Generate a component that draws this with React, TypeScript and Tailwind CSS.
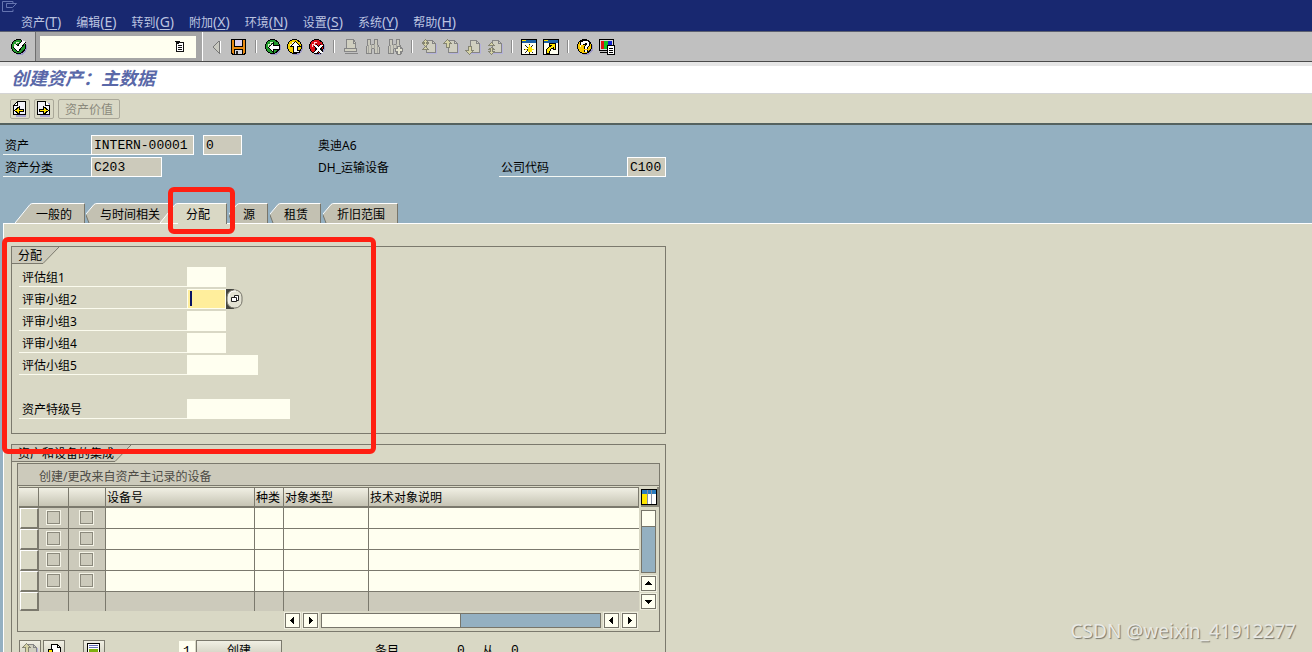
import React from 'react';

const menus = [
  ['资产', 'T'],
  ['编辑', 'E'],
  ['转到', 'G'],
  ['附加', 'X'],
  ['环境', 'N'],
  ['设置', 'S'],
  ['系统', 'Y'],
  ['帮助', 'H'],
];

type IconProps = { children: React.ReactNode; className?: string };

function Icon({ children, className = '' }: IconProps) {
  return (
    <svg width="16" height="16" viewBox="0 0 16 16" className={`block shrink-0 ${className}`} shapeRendering="crispEdges" aria-hidden="true">
      {children}
    </svg>
  );
}

function Ball({ color, shine, children }: { color: string; shine: string; children: React.ReactNode }) {
  return (
    <Icon>
      <circle cx="9" cy="9" r="7" fill="#9c98c8" />
      <circle cx="7.5" cy="7.5" r="7" fill={color} stroke="#000" />
      <path d="M3 5h2v-2h3v1h-2v2h-2v2h-1z" fill={shine} />
      {children}
    </Icon>
  );
}

function ToolButton({ label, children }: { label: string; children: React.ReactNode }) {
  return (
    <button type="button" aria-label={label} className="block shrink-0">
      {children}
    </button>
  );
}

function Separator() {
  return <span className="mx-[2px] h-[13px] w-[2px] border-l border-r border-l-[#8c8c8c] border-r-white" />;
}

function PageBase({ arrows }: { arrows: string }) {
  return (
    <Icon>
      <path d="M6 3h7l3 3v9H6z" fill="#b4b2da" />
      <path d="M5.500 1.500h6l3 3v9h-9z" fill="#d0cfc0" stroke="#858585" />
      <path d="M11.500 1.500v3h3" fill="none" stroke="#858585" />
      <path d={arrows} fill="#d6d3a6" stroke="#858572" />
    </Icon>
  );
}

function Binoculars({ plus = false }: { plus?: boolean }) {
  return (
    <Icon>
      <path d="M2.500 .5h3v5h4v-5h3v5l2 3v6h-5v-5h-3v5h-5v-6l1-3z" fill="#cac9bd" stroke="#858585" />
      <path d="M6 5v5M9 5v5M3 6v8M12 6v8" stroke="#a5a5a0" />
      {plus && <path d="M10.500 7.500h3v2h2v3h-2v3h-3v-3h-2v-3h2z" fill="#e2e1cf" stroke="#858585" />}
    </Icon>
  );
}

function WindowIcon({ children }: { children: React.ReactNode }) {
  return (
    <Icon>
      <path d="M.5 .5h15v15H.5z" fill="#fffff0" stroke="#000" />
      <path d="M1 1h14v3H1z" fill="#1c62a8" />
      <path d="M1 1h4v1H1z" fill="#ffe600" />
      {children}
    </Icon>
  );
}

function PageArrow({ right = false }: { right?: boolean }) {
  return (
    <Icon>
      <path d="M4 2h10v14H4z" fill="#aaa6d4" />
      {right ? (
        <path d="M1.500 .5h8l4 4v9h-12z" fill="#f2f2fa" stroke="#000" />
      ) : (
        <path d="M5.500 .5h8v13h-12v-9z" fill="#f2f2fa" stroke="#000" />
      )}
      <path d={right ? 'M9.500 .5v4h4' : 'M5.500 .5v4h-4'} fill="#fff" stroke="#000" />
      <path d={right ? 'M3.500 8.500h4v-3l5 4-5 4v-3h-4z' : 'M11.500 8.500h-4v-3l-5 4 5 4v-3h4z'} fill="#ffe600" stroke="#000" />
    </Icon>
  );
}

function Toolbar() {
  return (
    <div className="flex h-[31px] shrink-0 items-stretch border-t border-b border-t-[#5c6070] border-b-[#4a4a4a] bg-[#c0c0c0]">
      <div className="flex w-9 items-center justify-center border-r border-[#6e6e6e] pl-[2px]">
        <ToolButton label="确认">
          <Ball color="#229a2c" shine="#d8f0c8">
            <path d="M4 7l3 3 6-8" fill="none" stroke="#000" strokeWidth="5" />
            <path d="M4 7l3 3 6-8" fill="none" stroke="#fff" strokeWidth="3" />
          </Ball>
        </ToolButton>
      </div>
      <div className="flex w-[167px] items-center border-r border-white bg-[#a6a6a6] pl-1">
        <div className="relative">
          <input aria-label="命令" className="block h-[22px] w-[156px] bg-[#fffff0] px-1 text-xs outline-none" />
          <svg width="10" height="12" viewBox="0 0 10 12" className="absolute right-[11px] top-[5px]" shapeRendering="crispEdges" aria-hidden="true">
            <path d="M1.500 1.500h7v9h-7z" fill="#fff" stroke="#111" />
            <path d="M0 0h5v1h-1v2h-3v-2h-1zM3 4h4v1h-4zM3 6h4v1h-4zM3 8h4v1h-4z" fill="#111" />
          </svg>
        </div>
      </div>
      <div className="flex items-center gap-[6px] pl-[6px]">
        <ToolButton label="折叠">
          <Icon>
            <path d="M10 2v12l-6-6z" fill="#c9c9c0" />
            <path d="M10.500 1.500v13" stroke="#777" />
            <path d="M10 2l-6 6 6 6" fill="none" stroke="#777" />
            <path d="M11.500 2v12" stroke="#fff" />
          </Icon>
        </ToolButton>
        <ToolButton label="保存">
          <Icon>
            <path d="M.5 .5h14v14h-1v1h-12v-1h-1z" fill="#e88a12" stroke="#000" />
            <path d="M3.500 .5h8v7h-8z" fill="#dcd0ee" stroke="#000" />
            <path d="M3.500 10.500h8v5h-8z" fill="#d8d8e0" stroke="#000" />
            <path d="M5 12h2v3h-2z" fill="#222" />
          </Icon>
        </ToolButton>
        <Separator />
        <ToolButton label="返回">
          <Ball color="#229a2c" shine="#d8f0c8">
            <path d="M3.500 8.500l5-5v3h6v4h-6v3z" fill="#fff" stroke="#000" />
          </Ball>
        </ToolButton>
        <ToolButton label="退出">
          <Ball color="#f4d000" shine="#fffbd0">
            <path d="M8.500 2.500l5 5h-3v4h2v2h-6v-6h-3z" fill="#fff" stroke="#000" />
          </Ball>
        </ToolButton>
        <ToolButton label="取消">
          <Ball color="#dc1018" shine="#ffd0d0">
            <path d="M6 6l7 8M13 6l-7 8" stroke="#000" strokeWidth="4" />
            <path d="M6 6l7 8M13 6l-7 8" stroke="#fff" strokeWidth="2" />
          </Ball>
        </ToolButton>
        <Separator />
        <ToolButton label="打印">
          <Icon>
            <path d="M3.500 .5h7l2 3v6h-9z" fill="#d0cfc0" stroke="#858585" />
            <path d="M1.500 9.500h12v3h-12z" fill="#d0cfc0" stroke="#858585" />
            <path d="M2 14.500h13M10.500 1v3h2" fill="none" stroke="#858585" />
          </Icon>
        </ToolButton>
        <ToolButton label="查找"><Binoculars /></ToolButton>
        <ToolButton label="继续查找"><Binoculars plus /></ToolButton>
        <Separator />
        <ToolButton label="首页"><PageBase arrows="M4.500 .5l3 3h-2v1h2l-3 3-3-3h2v-1h-2zM4.500 7.500l3 3h-6z" /></ToolButton>
        <ToolButton label="上一页"><PageBase arrows="M4.500 .5l4 4h-2v4h-3v-4h-3z" /></ToolButton>
        <ToolButton label="下一页"><PageBase arrows="M3.500 7.500h3v4h2l-4 4-4-4h3z" /></ToolButton>
        <ToolButton label="末页"><PageBase arrows="M4.500 3.500l3 3h-6zM4.500 8.500l3 2h-2v2h2l-3 3-3-3h2v-2h-2z" /></ToolButton>
        <Separator />
        <ToolButton label="新建会话">
          <WindowIcon>
            <path d="M8 5v10M3 10h10M4 6l8 8M12 6l-8 8" stroke="#222" />
            <path d="M7 8h3v4h-3zM8 6v2M4 10h2M11 10h2" fill="#ffe600" stroke="#ffe600" />
          </WindowIcon>
        </ToolButton>
        <ToolButton label="快捷方式">
          <WindowIcon>
            <path d="M6.500 4.500h6v6h-2v-2l-3 2-1 4h-3v-4l2-2 3-2h-2z" fill="#ffe600" stroke="#000" />
          </WindowIcon>
        </ToolButton>
        <Separator />
        <ToolButton label="帮助">
          <Ball color="#f8c800" shine="#fffbd0">
            <path d="M5 6v-2h2v-1h3l1 1v2l-2 2v2M9 11v2" fill="none" stroke="#000" strokeWidth="4" />
            <path d="M5 6v-2h2v-1h3l1 1v2l-2 2v2M9 11v2" fill="none" stroke="#fff" strokeWidth="2" />
          </Ball>
        </ToolButton>
        <ToolButton label="定制布局">
          <Icon>
            <path d="M.5 .5h14v11h-14z" fill="#d8d8d8" stroke="#000" />
            <path d="M2 2h3v8h-3z" fill="#e01010" />
            <path d="M5 2h4v8h-4z" fill="#10c020" />
            <path d="M9 2h4v8h-4z" fill="#1020d0" />
            <path d="M1 13.500h8" stroke="#000" />
            <path d="M8.500 6.500h7v9h-7z" fill="#fff" stroke="#000" />
            <path d="M10 9.500h4M10 11.500h4M10 13.500h4" stroke="#000" />
          </Icon>
        </ToolButton>
      </div>
    </div>
  );
}

type TabProps = { label: string; wide?: boolean; active?: boolean; className?: string };

function Tab({ label, wide, active, className = '' }: TabProps) {
  const fill = active ? '#d9d8c5' : '#c3c1b2';
  return (
    <button
      type="button"
      role="tab"
      aria-selected={!!active}
      className={`flex h-5 items-start text-xs leading-[22px] ${active ? 'relative z-10' : ''} ${className}`}
    >
      {wide ? (
        <svg width="18" height="20" className="block shrink-0" aria-hidden="true">
          <path d="M0 20L16 1H18V20z" fill={fill} />
          <path d="M0 20L15 1.500Q16 .5 18 .5" fill="none" stroke="#fff" />
        </svg>
      ) : (
        <svg width="11" height="20" className="block shrink-0" aria-hidden="true">
          <path d="M0 12L8 1H11V20H3z" fill={fill} />
          <path d="M0 11L8 1.500Q9 .5 11 .5" fill="none" stroke="#fff" />
          <path d="M0 12L3 20" stroke="#77756a" />
        </svg>
      )}
      <span
        className={
          active
            ? 'h-[21px] border-t border-r border-t-white border-r-[#77756a] bg-[#d9d8c5] pl-2 pr-4'
            : 'h-5 border-t border-r border-t-white border-r-[#77756a] bg-[#c3c1b2] pl-[3px] pr-3'
        }
      >
        {label}
      </span>
    </button>
  );
}

function GroupTitle({ children }: { children: React.ReactNode }) {
  return (
    <div className="flex h-[17px] items-stretch">
      <h2 className="border-b border-[#7b796d] bg-[#cccabb] pl-[6px] text-xs leading-[18px]">{children}</h2>
      <svg width="17" height="17" className="block" aria-hidden="true">
        <path d="M0 0H17L1 16H0z" fill="#cccabb" />
        <path d="M17 0L1 16.500H0" fill="none" stroke="#7b796d" />
      </svg>
    </div>
  );
}

const fields = [
  { id: 'g1', label: '评估组1', width: 'w-[39px]' },
  { id: 'g2', label: '评审小组2', width: 'w-[39px]', focused: true },
  { id: 'g3', label: '评审小组3', width: 'w-[39px]' },
  { id: 'g4', label: '评审小组4', width: 'w-[39px]' },
  { id: 'g5', label: '评估小组5', width: 'w-[71px]' },
  { id: 'super', label: '资产特级号', width: 'w-[103px]', spaced: true },
];

function AllocationGroup() {
  return (
    <section className="relative w-[655px] shrink-0 border border-[#7b796d] pb-[14px]">
      <GroupTitle>分配</GroupTitle>
      <div className="mt-[3px] flex flex-col gap-[2px] pl-[7px]">
        {fields.map((f) => (
          <div key={f.id} className={f.spaced ? 'mt-[22px] flex h-5' : 'flex h-5'}>
            <label htmlFor={f.id} className="w-[168px] border-b border-[#fbfbee] pl-[3px] text-xs leading-[22px]">
              {f.label}
            </label>
            <div className="relative flex">
              <input
                id={f.id}
                className={`h-5 border border-[#fffff0] px-1 text-xs outline-none ${f.width} ${f.focused ? 'bg-[#ffee9c]' : 'bg-[#fffff0]'}`}
              />
              {f.focused && (
                <>
                  <span className="absolute left-[3px] top-[2px] h-[15px] w-[2px] bg-[#0a1464]" />
                  <button type="button" aria-label="值帮助" className="block">
                    <svg width="17" height="20" aria-hidden="true">
                      <path d="M0 0h8v20h-8z" fill="#45453f" />
                      <rect x="1" y="1" width="15" height="18" rx="7" fill="#e3e2d3" stroke="#77756a" />
                      <path d="M3 14V6Q4 2 8 2h2" fill="none" stroke="#fff" />
                      <path d="M8.500 6.500h4v5h-4z" fill="#fff" stroke="#222" />
                      <path d="M5.500 8.500h5v4h-5z" fill="#fff" stroke="#222" />
                    </svg>
                  </button>
                </>
              )}
            </div>
          </div>
        ))}
      </div>
      <div className="pointer-events-none absolute -left-[10px] -top-[10px] z-20 h-[217px] w-[374px] rounded-md border-[5px] border-[#ff1f12]" />
    </section>
  );
}

function ScrollArrow({ label, d }: { label: string; d: string }) {
  return (
    <button type="button" aria-label={label} className="block h-[15px] w-[15px] shrink-0 border border-[#77756a] bg-[#fffff0] outline outline-[#f0efe0]">
      <svg width="13" height="13" shapeRendering="crispEdges" aria-hidden="true">
        <path d={d} fill="#000" />
      </svg>
    </button>
  );
}

const headCell = 'h-[21px] border-r border-b-2 border-t border-[#7b796d] bg-linear-to-b from-[#f1f0e4] to-[#c6c4b4] p-0 pl-px pt-[2px] text-left text-xs font-normal leading-4';
const greyCell = 'border-r border-b border-[#7b796d] bg-[#cccabb] p-0 pt-[2px] align-top';
const whiteCell = 'border-r border-b border-[#7b796d] bg-[#fffff0] p-0';
const emptyCell = 'border-r border-[#7b796d] bg-[#cccabb] p-0';
const rowButton = 'ml-px block w-[19px] border-t border-l border-r-2 border-b-2 border-t-white border-l-white border-r-[#7b796d] border-b-[#7b796d] bg-[#d9d8c5]';
const tick = 'block h-[15px] w-[15px] appearance-none border border-[#f4f3e6] bg-[#cccabb] shadow-[inset_0_0_0_1px_#8b897c]';

function EquipmentTable() {
  return (
    <div className="ml-[5px] mt-px h-[169px] w-[643px] border border-[#7b796d]">
      <div className="h-[22px] border-b border-[#7b796d] bg-[#cccabb] pl-[21px] text-xs leading-[26px] text-[#4c4b45]">
        创建/更改来自资产主记录的设备
      </div>
      <div className="flex h-[125px] items-start pl-px pt-px">
        <table className="w-[620px] table-fixed border-separate border-spacing-0">
          <colgroup>
            <col className="w-[20px]" />
            <col className="w-[30px]" />
            <col className="w-[37px]" />
            <col className="w-[149px]" />
            <col className="w-[29px]" />
            <col className="w-[85px]" />
            <col />
          </colgroup>
          <thead>
            <tr>
              <th className={headCell} />
              <th className={headCell} />
              <th className={headCell} />
              <th className={headCell}>设备号</th>
              <th className={headCell}>种类</th>
              <th className={headCell}>对象类型</th>
              <th className={headCell}>技术对象说明</th>
            </tr>
          </thead>
          <tbody>
            {[1, 2, 3, 4].map((n) => (
              <tr key={n} className="h-[21px]">
                <td className="bg-[#cccabb] p-0">
                  <button type="button" aria-label={`行 ${n}`} className={`${rowButton} h-[21px]`} />
                </td>
                <td className={`${greyCell} pl-[7px]`}>
                  <input type="checkbox" aria-label={`行 ${n} 创建`} className={tick} />
                </td>
                <td className={`${greyCell} pl-[10px]`}>
                  <input type="checkbox" aria-label={`行 ${n} 更改`} className={tick} />
                </td>
                <td className={whiteCell} />
                <td className={whiteCell} />
                <td className={whiteCell} />
                <td className="border-b border-[#7b796d] bg-[#fffff0] p-0" />
              </tr>
            ))}
            <tr className="h-[19px]">
              <td className="bg-[#cccabb] p-0">
                <button type="button" aria-label="行 5" className={`${rowButton} h-[19px]`} />
              </td>
              <td className={emptyCell} />
              <td className={emptyCell} />
              <td className={emptyCell} />
              <td className={emptyCell} />
              <td className={emptyCell} />
              <td className="bg-[#cccabb] p-0" />
            </tr>
          </tbody>
        </table>
        <div className="flex flex-col items-start gap-[3px] pl-[2px]">
          <button type="button" aria-label="配置" className="block border-r-2 border-b-2 border-[#8b897c] pt-[2px]">
            <Icon>
              <path d="M.5 .5h15v15H.5z" fill="#fff" stroke="#000" />
              <path d="M1 1h14v4H1z" fill="#2a7cc0" />
              <path d="M1 5h5v10H1z" fill="#ffe600" />
              <path d="M6.500 1v14M10.500 1v14" stroke="#8890a0" />
            </Icon>
          </button>
          <div className="h-[63px] w-[15px] border border-[#77756a] bg-[#94b0c1]">
            <div className="h-4 border-b border-[#77756a] bg-[#fffff0]" />
          </div>
          <ScrollArrow label="上" d="M6 4h1v1h1v1h1v1h1v1h-7v-1h1v-1h1v-1h1z" />
          <ScrollArrow label="下" d="M3 5h7v1h-1v1h-1v1h-1v1h-1v-1h-1v-1h-1v-1h-1z" />
        </div>
      </div>
      <div className="flex gap-[3px] pl-[267px] pt-[2px]">
        <ScrollArrow label="左" d="M8 3v7h-1v-1h-1v-1h-1v-1h-1v-1h1v-1h1v-1h1v-1z" />
        <ScrollArrow label="右" d="M5 3v7h1v-1h1v-1h1v-1h1v-1h-1v-1h-1v-1h-1v-1z" />
        <div className="h-[15px] w-[280px] border border-[#77756a] bg-[#94b0c1]">
          <div className="h-full w-1/2 border-r border-[#77756a] bg-[#fffff0]" />
        </div>
        <ScrollArrow label="左页" d="M8 3v7h-1v-1h-1v-1h-1v-1h-1v-1h1v-1h1v-1h1v-1z" />
        <ScrollArrow label="右页" d="M5 3v7h1v-1h1v-1h1v-1h1v-1h-1v-1h-1v-1h-1v-1z" />
      </div>
    </div>
  );
}

const raised = 'flex h-[22px] items-center justify-center border border-[#7b796d] bg-linear-to-b from-[#f1f0e4] to-[#c6c4b4] text-xs';

function EquipmentGroup() {
  return (
    <section className="mt-[10px] w-[655px] shrink-0 grow border border-b-0 border-[#7b796d]">
      <GroupTitle>资产和设备的集成</GroupTitle>
      <EquipmentTable />
      <div className="mt-2 flex items-center pl-[7px] text-xs">
        <button type="button" aria-label="前一个" className={`${raised} w-[22px]`}>
          <PageBase arrows="M4.500 .5l4 4h-2v6h-3v-6h-3z" />
        </button>
        <button type="button" aria-label="后一个" className={`${raised} ml-[2px] w-[22px]`}>
          <Icon>
            <path d="M5.500 1.500h6l3 3v10h-9z" fill="#fff" stroke="#000" />
            <path d="M11.500 1.500v3h3" fill="none" stroke="#000" />
            <path d="M2.500 6.500h4v4h2l-4 4-4-4h2z" fill="#ffe600" stroke="#000" />
          </Icon>
        </button>
        <button type="button" aria-label="明细" className={`${raised} ml-[18px] w-[22px]`}>
          <Icon>
            <path d="M1.500 .5h12v14h-12z" fill="#fff" stroke="#000" />
            <path d="M3 2.500h9M3 4.500h9" stroke="#6670b8" />
            <path d="M3 6h9v7H3z" fill="#7fb010" />
          </Icon>
        </button>
        <input aria-label="数量" defaultValue="1" className="ml-[74px] h-5 w-4 bg-[#fffff0] pl-1 font-['Liberation_Mono',monospace] text-[13px] outline-none" />
        <button type="button" className={`${raised} ml-px w-[86px]`}>创建</button>
        <span className="ml-[93px] w-[82px]">条目</span>
        <span className="w-[25px] font-['Liberation_Mono',monospace] text-[13px]">0</span>
        <span className="w-[29px]">从</span>
        <span className="font-['Liberation_Mono',monospace] text-[13px]">0</span>
      </div>
    </section>
  );
}

const readOnly = "block h-5 border border-white bg-[#cccabb] pl-[2px] font-['Liberation_Mono',monospace] text-[13px] outline-none";
const headLabel = 'h-5 border-b border-[#f4f8f4] pl-[2px] text-xs leading-[22px]';

export default function App() {
  return (
    <div className="relative flex h-screen flex-col overflow-hidden bg-[#94b0c1] font-['Noto_Sans','Noto_Sans_CJK_SC',sans-serif] text-black">
      <header className="h-[31px] shrink-0 bg-[#182870]">
        <svg width="18" height="12" viewBox="0 0 18 12" className="ml-[1px] block" fill="none" stroke="#6474b0" aria-hidden="true">
          <path d="M12 3.500V1.500H1.500v10H12V9.500M5.500 3.500h10l-4 4h-6z" />
        </svg>
        <nav className="flex gap-[15px] pl-[21px] text-[#bcc4e0]">
          {menus.map(([name, key]) => (
            <button key={key} type="button" className="text-xs leading-5">
              {name}<span className="text-sm leading-5">(<u className="underline-offset-2">{key}</u>)</span>
            </button>
          ))}
        </nav>
      </header>

      <Toolbar />

      <div className="h-8 shrink-0 border-t-4 border-b border-t-[#e6e6e6] border-b-[#d4d4d4] bg-white pl-[11px]">
        <h1 className="text-lg font-bold italic leading-6 text-[#5a68a8]">创建资产：主数据</h1>
      </div>

      <div className="flex h-[31px] shrink-0 items-center gap-1 border-b-2 border-[#55625f] bg-[#d9d8c5] pl-[10px]">
        <button type="button" aria-label="上一个资产" className="flex h-5 w-5 items-center justify-center rounded-xs border border-[#aaa899]">
          <PageArrow />
        </button>
        <button type="button" aria-label="下一个资产" className="flex h-5 w-5 items-center justify-center rounded-xs border border-[#aaa899]">
          <PageArrow right />
        </button>
        <button type="button" disabled className="h-5 rounded-xs border border-[#aaa899] px-[6px] text-xs leading-5 text-[#8a897c]">
          资产价值
        </button>
      </div>

      <div className="grid shrink-0 grid-cols-[88px_227px_181px_128px_40px] gap-y-[2px] pl-[3px] pt-[10px]">
        <label htmlFor="asset" className={headLabel}>资产</label>
        <div className="flex gap-[9px]">
          <input id="asset" readOnly value="INTERN-00001" className={`${readOnly} w-[103px]`} />
          <input aria-label="子编号" readOnly value="0" className={`${readOnly} w-[39px]`} />
        </div>
        <span className="col-span-3 h-5 text-xs leading-[22px]">奥迪A6</span>
        <label htmlFor="class" className={headLabel}>资产分类</label>
        <input id="class" readOnly value="C203" className={`${readOnly} w-[71px]`} />
        <span className="h-5 text-xs leading-[22px]">DH_运输设备</span>
        <label htmlFor="company" className={headLabel}>公司代码</label>
        <input id="company" readOnly value="C100" className={`${readOnly} w-[39px]`} />
      </div>

      <div role="tablist" className="mt-[26px] flex h-5 shrink-0 pl-[15px]">
        <Tab label="一般的" wide />
        <Tab label="与时间相关" className="ml-px" />
        <Tab label="分配" wide active className="-ml-[13px]" />
        <Tab label="源" className="ml-[2px]" />
        <Tab label="租赁" className="ml-[2px]" />
        <Tab label="折旧范围" className="ml-[2px]" />
      </div>

      <main className="relative ml-[3px] flex min-h-0 grow flex-col border-t border-l border-white bg-[#d9d8c5] pl-[7px] pt-[22px]">
        <AllocationGroup />
        <EquipmentGroup />
        <div className="pointer-events-none absolute -top-[37px] left-[164px] z-20 h-[47px] w-[67px] rounded-md border-[5px] border-[#ff1f12]" />
      </main>

      <div className="absolute bottom-[7px] right-4 text-[19px] leading-7 text-[#e9e9e4] [text-shadow:1px_1px_1px_#77766c]">
        CSDN @weixin_41912277
      </div>
    </div>
  );
}
